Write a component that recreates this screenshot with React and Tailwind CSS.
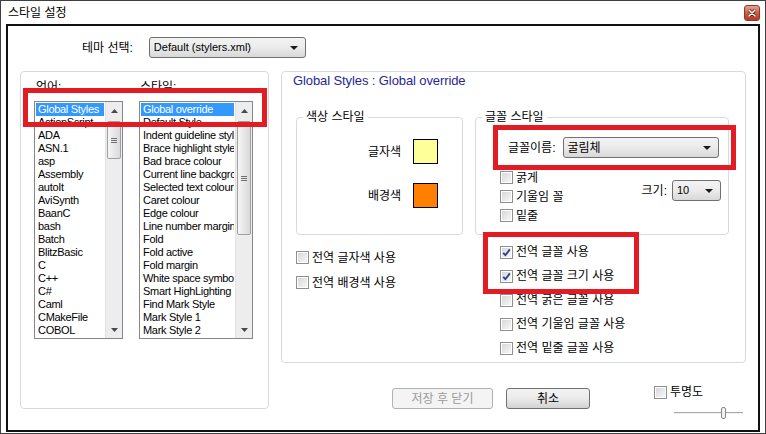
import React from "react";

const langs = ["Global Styles","ActionScript","ADA","ASN.1","asp","Assembly","autoIt","AviSynth","BaanC","bash","Batch","BlitzBasic","C","C++","C#","Caml","CMakeFile","COBOL"];
const styleItems = ["Global override","Default Style","Indent guideline style","Brace highlight style","Bad brace colour","Current line background","Selected text colour","Caret colour","Edge colour","Line number margin","Fold","Fold active","Fold margin","White space symbol","Smart HighLighting","Find Mark Style","Mark Style 1","Mark Style 2"];

function Tri({ down, w = 7, h = 4, color = "#3c3c3c" }) {
  return (
    <svg width={w} height={h} viewBox={`0 0 ${w} ${h}`}>
      <polygon points={down ? `0,0 ${w},0 ${w / 2},${h}` : `0,${h} ${w},${h} ${w / 2},0`} fill={color} />
    </svg>
  );
}

function ScrollBar({ thumbClass }) {
  return (
    <div className="w-[17px] flex flex-col bg-[#ededed] border-l border-[#e2e2e2]">
      <div className="h-[18px] flex items-center justify-center">
        <Tri w={7} h={4} color="#4a4a4a" />
      </div>
      <div className={`mx-[1px] mt-[1px] rounded-[2px] border border-[#a0a0a0] bg-gradient-to-r from-[#f6f6f6] to-[#dadada] flex items-center justify-center ${thumbClass}`}>
        <div className="flex flex-col gap-[1px]">
          <div className="w-[6px] h-[1px] bg-[#707070]" />
          <div className="w-[6px] h-[1px] bg-[#707070]" />
          <div className="w-[6px] h-[1px] bg-[#707070]" />
        </div>
      </div>
      <div className="flex-1" />
      <div className="h-[17px] flex items-center justify-center">
        <Tri down w={7} h={4} color="#4a4a4a" />
      </div>
    </div>
  );
}

function ListBox({ items, widthClass, thumbClass }) {
  return (
    <div className={`flex h-[238px] border border-[#828790] bg-white ${widthClass}`}>
      <div className="flex-1 min-w-0 overflow-hidden p-[1px] text-[11px] tracking-[-0.3px]">
        {items.map((t, i) => (
          <div
            key={t}
            className={`h-[13px] leading-[13px] pl-[2px] whitespace-nowrap overflow-hidden ${i === 0 ? "bg-[#3399ff] text-white" : "text-black"}`}
          >
            {t}
          </div>
        ))}
      </div>
      <ScrollBar thumbClass={thumbClass} />
    </div>
  );
}

function Combo({ widthClass, children, textClass = "text-[11px]" }) {
  return (
    <div className={`h-[21px] flex items-center justify-between rounded-[3px] border border-[#707070] bg-gradient-to-b from-[#f3f3f3] via-[#ebebeb] to-[#d8d8d8] pl-[4px] pr-[7px] ${widthClass}`}>
      <span className={`${textClass} whitespace-nowrap`}>{children}</span>
      <Tri down w={8} h={4} color="#1a1a1a" />
    </div>
  );
}

function CheckBox({ checked }) {
  return (
    <span className="w-[13px] h-[13px] border border-[#8e8f8f] bg-white p-[1px] flex shrink-0">
      <span className="flex-1 bg-gradient-to-br from-[#d8d8d8] to-[#f7f7f7] flex items-center justify-center">
        {checked && (
          <svg width="9" height="9" viewBox="0 0 9 9">
            <path d="M1.2 4.8 L3.4 7.2 L7.8 1.4" fill="none" stroke="#2a3f8f" strokeWidth="1.8" />
          </svg>
        )}
      </span>
    </span>
  );
}

function CheckRow({ label, checked, rowClass }) {
  return (
    <div className={`flex items-center gap-[3px] ${rowClass}`}>
      <CheckBox checked={checked} />
      <span className="text-[12px] leading-[14px] whitespace-nowrap">{label}</span>
    </div>
  );
}

function GroupFrame({ legend, widthClass, children }) {
  return (
    <div className={`relative h-[118px] rounded-[4px] border border-[#d5dbe0] ${widthClass}`}>
      <span className="absolute -top-[8px] left-[6px] bg-white px-[3px] text-[12px] leading-[14px]">{legend}</span>
      {children}
    </div>
  );
}

export default function App() {
  return (
    <div className="relative w-[766px] h-[434px] bg-white border border-[#3f3f3f] flex flex-col text-black font-['Liberation_Sans','Noto_Sans_CJK_KR',sans-serif] text-[12px]">
      {/* Title bar */}
      <div className="h-[23px] flex items-center justify-between pl-[7px] pr-[5px]">
        <span className="text-[12px] leading-[14px]">스타일 설정</span>
        <div className="w-[16px] h-[16px] rounded-[3px] border border-[#8a3a2c] bg-gradient-to-b from-[#e9a493] via-[#d05a42] to-[#b63a22] flex items-center justify-center">
          <svg width="8" height="8" viewBox="0 0 8 8">
            <path d="M1 1 L7 7 M7 1 L1 7" stroke="#5a1a10" strokeWidth="3" strokeLinecap="round" />
            <path d="M1 1 L7 7 M7 1 L1 7" stroke="#ffffff" strokeWidth="1.6" strokeLinecap="round" />
          </svg>
        </div>
      </div>

      {/* Content */}
      <div className="flex-1 mx-[5px] mb-[1px] border-2 border-[#111111] flex flex-col pl-[12px]">
        {/* Theme row */}
        <div className="mt-[11px] flex items-center pl-[62px] gap-[16px]">
          <span className="text-[12px] leading-[14px]">테마 선택:</span>
          <Combo widthClass="w-[157px]">Default (stylers.xml)</Combo>
        </div>

        {/* Main */}
        <div className="mt-[13px] flex gap-[12px] items-start">
          {/* Left group */}
          <div className="w-[249px] h-[338px] rounded-[4px] border border-[#d5dbe0] pl-[13px]">
            <div className="h-[29px] flex pt-[8px]">
              <span className="w-[105px] pl-[2px] leading-[14px]">언어:</span>
              <span className="pl-[1px] leading-[14px]">스타일:</span>
            </div>
            <div className="flex gap-[16px]">
              <ListBox items={langs} widthClass="w-[89px]" thumbClass="h-[38px]" />
              <ListBox items={styleItems} widthClass="w-[114px]" thumbClass="h-[114px]" />
            </div>
          </div>

          {/* Right column */}
          <div className="flex flex-col">
            <div className="w-[465px] h-[292px] rounded-[4px] border border-[#d5dbe0]">
              <div className="h-[16px] pt-[1px] pl-[11px] text-[13px] leading-[15px] text-[#1f2896] tracking-[-0.1px]">
                Global Styles : Global override
              </div>
              <div className="mt-[29px] flex gap-[12px] pl-[14px]">
                {/* Colour column */}
                <div className="flex flex-col">
                  <GroupFrame legend="색상 스타일" widthClass="w-[167px]">
                    <div className="pt-[21px] pr-[24px] flex flex-col items-end">
                      <div className="flex items-center gap-[12px]">
                        <span className="leading-[14px]">글자색</span>
                        <div className="w-[25px] h-[25px] border border-black bg-[#ffff99]" />
                      </div>
                      <div className="mt-[19px] flex items-center gap-[12px]">
                        <span className="leading-[14px]">배경색</span>
                        <div className="w-[25px] h-[25px] border border-black bg-[#ff8000]" />
                      </div>
                    </div>
                  </GroupFrame>
                  <div className="mt-[10px] flex flex-col">
                    <CheckRow label="전역 글자색 사용" rowClass="h-[25px]" />
                    <CheckRow label="전역 배경색 사용" rowClass="h-[25px]" />
                  </div>
                </div>

                {/* Font column */}
                <div className="flex flex-col">
                  <GroupFrame legend="글꼴 스타일" widthClass="w-[254px]">
                    <div className="pt-[19px] pl-[32px] flex items-center gap-[7px]">
                      <span className="leading-[14px]">글꼴이름:</span>
                      <Combo widthClass="w-[156px]" textClass="text-[12px]">굴림체</Combo>
                    </div>
                    <div className="mt-[10px] flex">
                      <div className="pl-[24px] flex flex-col">
                        <CheckRow label="굵게" rowClass="h-[19px]" />
                        <CheckRow label="기울임 꼴" rowClass="h-[19px]" />
                        <CheckRow label="밑줄" rowClass="h-[19px]" />
                      </div>
                      <div className="ml-auto pr-[7px] mt-[12px] flex items-center gap-[5px] h-[21px]">
                        <span className="leading-[14px]">크기:</span>
                        <Combo widthClass="w-[49px]">10</Combo>
                      </div>
                    </div>
                  </GroupFrame>
                  <div className="mt-[5px] pl-[25px] flex flex-col">
                    <CheckRow label="전역 글꼴 사용" checked rowClass="h-[24px]" />
                    <CheckRow label="전역 글꼴 크기 사용" checked rowClass="h-[24px]" />
                    <CheckRow label="전역 굵은 글꼴 사용" rowClass="h-[24px]" />
                    <CheckRow label="전역 기울임 글꼴 사용" rowClass="h-[24px]" />
                    <CheckRow label="전역 밑줄 글꼴 사용" rowClass="h-[24px]" />
                  </div>
                </div>
              </div>
            </div>

            {/* Bottom buttons */}
            <div className="mt-[25px] flex items-start">
              <div className="ml-[111px] w-[101px] h-[21px] rounded-[3px] border border-[#adb2b5] bg-[#f4f4f4] flex items-center justify-center text-[#9a9a9a] leading-[14px]">
                저장 후 닫기
              </div>
              <div className="ml-[13px] w-[84px] h-[21px] rounded-[3px] border border-[#707070] bg-gradient-to-b from-[#f3f3f3] via-[#ebebeb] to-[#d2d2d2] flex items-center justify-center leading-[14px]">
                취소
              </div>
              <div className="ml-[64px] -mt-[3px] flex flex-col">
                <CheckRow label="투명도" rowClass="h-[14px]" />
                <div className="relative mt-[8px] ml-[20px] w-[69px] h-[12px]">
                  <div className="absolute left-0 right-0 top-[5px] h-[2px] border-t border-[#a8a8a8] border-b border-b-[#f0f0f0]" />
                  <div className="absolute left-[47px] top-0 w-[5px] h-[12px] rounded-[2px] border border-[#8a8a8a] bg-[#f2f2f2]" />
                </div>
              </div>
            </div>
          </div>
        </div>
      </div>

      {/* Red highlight annotations */}
      <div className="absolute left-[22px] top-[87px] w-[244px] h-[39px] border-[5px] border-[#e31b23]" />
      <div className="absolute left-[492px] top-[124px] w-[243px] h-[45px] border-[5px] border-[#e31b23]" />
      <div className="absolute left-[482px] top-[231px] w-[156px] h-[62px] border-[5px] border-[#e31b23]" />
    </div>
  );
}
